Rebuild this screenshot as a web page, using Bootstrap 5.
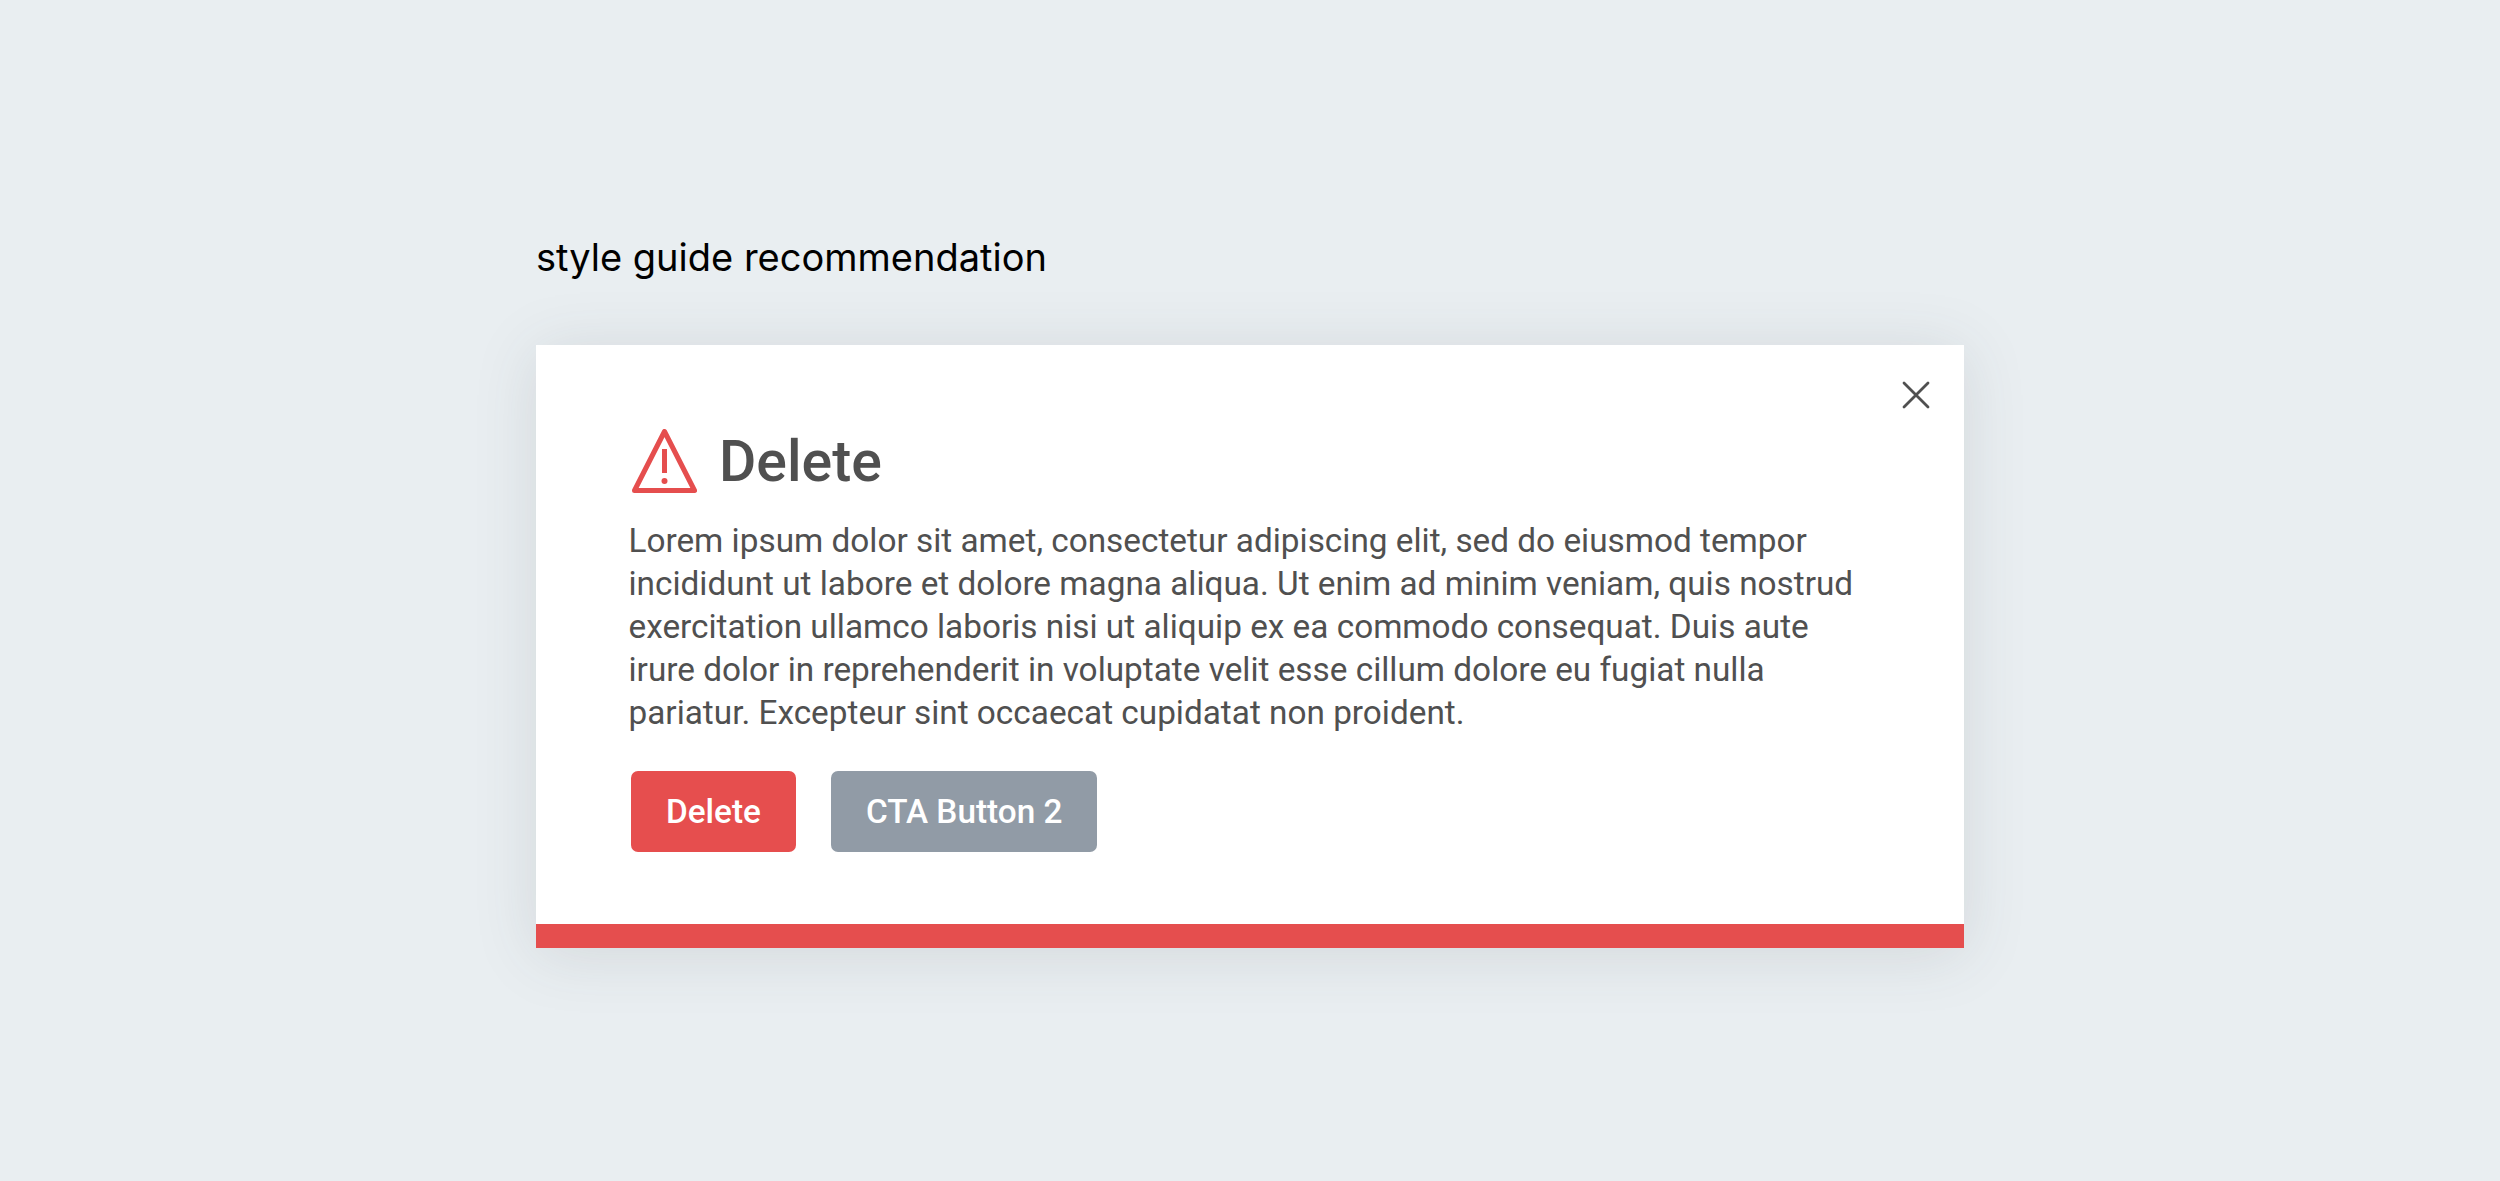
<!DOCTYPE html>
<html lang="en">
<head>
    <meta charset="UTF-8">
    <title>Style guide recommendation</title>
    <link href="https://cdn.jsdelivr.net/npm/bootstrap@5.3.0/dist/css/bootstrap.min.css" rel="stylesheet">
    <style>
        body {
            background-color: #e9eef1;
            font-family: Roboto, sans-serif;
            min-height: 100vh;
        }

        .guide-wrap {
            width: 1428px;
            margin-left: 536px;
            padding-top: 233px;
        }

        .guide-title {
            font-family: Inter, sans-serif;
            font-size: 38px;
            line-height: 48px;
            color: #000;
            margin-bottom: 64px;
            font-weight: 400;
        }

        .alert-box {
            background-color: #fff;
            box-shadow: 0 6px 60px rgba(60, 70, 80, 0.13);
            border-bottom: 24px solid #e54e4e;
            padding: 80px 96px 70px 92.5px;
            height: 603px;
        }

        .close-x {
            top: 35px;
            right: 33px;
            width: 30px;
            height: 30px;
        }

        .alert-head {
            color: #505050;
            font-size: 57.2px;
            font-weight: 500;
            line-height: 73px;
            gap: 22px;
        }

        .alert-icon {
            margin-left: 3.5px;
        }

        .alert-text {
            color: #505050;
            font-size: 33.33px;
            line-height: 43px;
            margin: 21px 0 37px;
        }

        .cta-row {
            gap: 35px;
            padding-left: 2px;
        }

        .cta-btn {
            color: #fff;
            font-size: 33.33px;
            font-weight: 500;
            line-height: 41px;
            height: 81px;
            border: 0;
            border-radius: 7px;
            padding: 20px 35.5px;
        }

        .cta-danger { background-color: #e64e4e; }
        .cta-muted { background-color: #919ba6; padding: 20px 34.5px; }
    </style>
</head>
<body>
    <div class="guide-wrap">
        <h1 class="guide-title">style guide recommendation</h1>
        <div class="alert-box position-relative">
            <svg class="close-x position-absolute" viewBox="0 0 30 30" fill="none" stroke="#505050" stroke-width="2.8" stroke-linecap="round">
                <path d="M3 3L27 27M27 3L3 27"/>
            </svg>
            <div class="alert-head d-flex align-items-center">
                <svg class="alert-icon" width="65" height="65" viewBox="0 0 65 65" fill="none" stroke="#e54e4e" stroke-width="5" stroke-linejoin="round">
                    <path d="M32.5 2.5L62.5 61.5H2.5Z"/>
                    <path d="M32.5 20V44"/>
                    <circle cx="32.5" cy="52" r="3" fill="#e54e4e" stroke="none"/>
                </svg>
                <span>Delete</span>
            </div>
            <p class="alert-text">Lorem ipsum dolor sit amet, consectetur adipiscing elit, sed do eiusmod tempor<br>incididunt ut labore et dolore magna aliqua. Ut enim ad minim veniam, quis nostrud<br>exercitation ullamco laboris nisi ut aliquip ex ea commodo consequat. Duis aute<br>irure dolor in reprehenderit in voluptate velit esse cillum dolore eu fugiat nulla<br>pariatur. Excepteur sint occaecat cupidatat non proident.</p>
            <div class="cta-row d-flex">
                <button type="button" class="btn cta-btn cta-danger">Delete</button>
                <button type="button" class="btn cta-btn cta-muted">CTA Button 2</button>
            </div>
        </div>
    </div>
    <script src="https://cdn.jsdelivr.net/npm/bootstrap@5.3.0/dist/js/bootstrap.bundle.min.js"></script>
</body>
</html>
